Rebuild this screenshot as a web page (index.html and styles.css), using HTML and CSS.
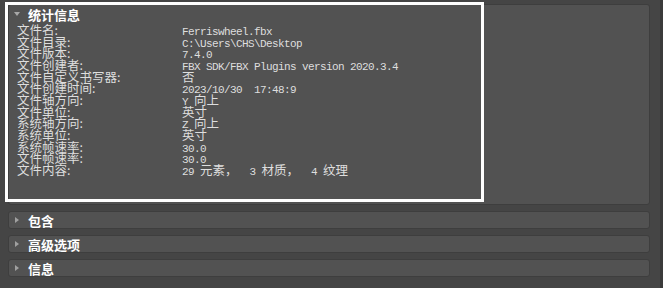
FILE: index.html
```html
<!doctype html>
<html lang="zh">
  <head>
    <meta charset="UTF-8" />
    <title>统计信息</title>
    <link rel="stylesheet" href="styles.css">
  </head>
  <body>
    <div class="page">
      <div class="panel open">
        <div class="focus"></div>
        <div class="head"><span class="tri down"></span>统计信息</div>
        <div class="stats">
          <div class="row"><span class="k">文件名:</span><span class="v">Ferriswheel.fbx</span></div>
          <div class="row"><span class="k">文件目录:</span><span class="v">C:\Users\CHS\Desktop</span></div>
          <div class="row"><span class="k">文件版本:</span><span class="v">7.4.0</span></div>
          <div class="row"><span class="k">文件创建者:</span><span class="v">FBX SDK/FBX Plugins version 2020.3.4</span></div>
          <div class="row"><span class="k">文件自定义书写器:</span><span class="v"><span class="cj">否</span></span></div>
          <div class="row"><span class="k">文件创建时间:</span><span class="v">2023/10/30  17:48:9</span></div>
          <div class="row"><span class="k">文件轴方向:</span><span class="v">Y <span class="cj">向上</span></span></div>
          <div class="row"><span class="k">文件单位:</span><span class="v"><span class="cj">英寸</span></span></div>
          <div class="row"><span class="k">系统轴方向:</span><span class="v">Z <span class="cj">向上</span></span></div>
          <div class="row"><span class="k">系统单位:</span><span class="v"><span class="cj">英寸</span></span></div>
          <div class="row"><span class="k">系统帧速率:</span><span class="v">30.0</span></div>
          <div class="row"><span class="k">文件帧速率:</span><span class="v">30.0</span></div>
          <div class="row"><span class="k">文件内容:</span><span class="v">29 <span class="cj">元素，</span>  3 <span class="cj">材质，</span>  4 <span class="cj">纹理</span></span></div>
        </div>
      </div>
      <div class="panel closed"><span class="tri right"></span>包含</div>
      <div class="panel closed"><span class="tri right"></span>高级选项</div>
      <div class="panel closed"><span class="tri right"></span>信息</div>
    </div>
    <div class="scroll"></div>
  </body>
</html>
```
FILE: styles.css
```css
html, body {
  margin: 0;
  height: 100%;
}

body {
  background-color: #454545;
  display: flex;
  font-family: 'Noto Sans CJK SC', sans-serif;
  color: #dedede;
  overflow: hidden;
}

.page {
  flex: 1;
  display: flex;
  flex-direction: column;
  gap: 6px;
  padding: 4px 10px 0 8px;
}

.scroll {
  width: 3px;
  background-color: #3b3b3b;
}

.panel {
  background-color: #525252;
  border: 1px solid #3e3e3e;
  border-radius: 3px;
  box-sizing: border-box;
}

.panel.open {
  position: relative;
  height: 201px;
}

/* 선택 강조 테두리 */
.focus {
  position: absolute;
  left: -4px;
  top: -3px;
  width: 479px;
  height: 200px;
  border: 3px solid #ffffff;
  box-sizing: border-box;
}

.head,
.panel.closed {
  display: flex;
  align-items: center;
  font-weight: bold;
  font-size: 13px;
  color: #ffffff;
}

.head {
  height: 18px;
  padding-left: 5px;
}

.panel.closed {
  height: 18px;
  padding-left: 6px;
}

.tri {
  width: 0;
  height: 0;
  margin-right: 8px;
}

.tri.down {
  border-left: 3px solid transparent;
  border-right: 3px solid transparent;
  border-top: 4px solid #a8a8a8;
}

.tri.right {
  border-top: 3px solid transparent;
  border-bottom: 3px solid transparent;
  border-left: 4px solid #a0a0a0;
  margin-right: 9px;
}

.stats {
  padding: 1px 0 0 8px;
}

.row {
  display: flex;
  align-items: baseline;
  height: 11.67px;
  line-height: 11.67px;
  white-space: pre;
}

.k {
  width: 165px;
  font-size: 12.5px;
}

.v {
  font-family: 'Liberation Mono', monospace;
  font-size: 11px;
  letter-spacing: -0.6px;
}

.cj {
  font-family: 'Noto Sans CJK SC', sans-serif;
  font-size: 12.5px;
  letter-spacing: 0;
}
```
